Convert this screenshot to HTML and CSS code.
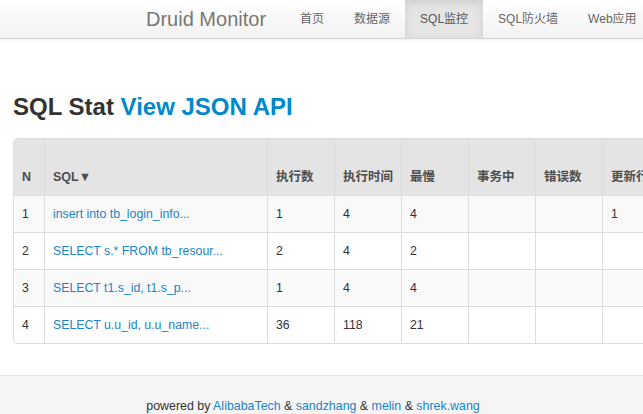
FILE: index.html
```html
<!DOCTYPE html>
<html lang="zh-CN">
<head>
    <meta charset="UTF-8">
    <meta name="viewport" content="width=device-width, initial-scale=1.0">
    <title>Druid Stat Index</title>
    <link rel="stylesheet" href="styles.css">
</head>
<body>
    <div class="navbar">
        <div class="navbar-inner">
            <a class="brand" href="#">Druid Monitor</a>
            <ul class="nav">
                <li><a href="#">首页</a></li>
                <li><a href="#">数据源</a></li>
                <li class="active"><a href="#">SQL监控</a></li>
                <li><a href="#">SQL防火墙</a></li>
                <li><a href="#">Web应用</a></li>
            </ul>
        </div>
    </div>

    <div class="container">
        <h2>SQL Stat <a href="#">View JSON API</a></h2>
        <div class="table-wrap">
            <table class="table">
                <colgroup>
                    <col class="c-n">
                    <col class="c-sql">
                    <col class="c-num">
                    <col class="c-num">
                    <col class="c-num">
                    <col class="c-num">
                    <col class="c-num">
                    <col class="c-num">
                </colgroup>
                <thead>
                    <tr>
                        <th>N</th>
                        <th>SQL▼</th>
                        <th>执行数</th>
                        <th>执行时间</th>
                        <th>最慢</th>
                        <th>事务中</th>
                        <th>错误数</th>
                        <th>更新行数</th>
                    </tr>
                </thead>
                <tbody>
                    <tr>
                        <td>1</td>
                        <td><a href="#">insert into tb_login_info...</a></td>
                        <td>1</td>
                        <td>4</td>
                        <td>4</td>
                        <td></td>
                        <td></td>
                        <td>1</td>
                    </tr>
                    <tr>
                        <td>2</td>
                        <td><a href="#">SELECT s.* FROM tb_resour...</a></td>
                        <td>2</td>
                        <td>4</td>
                        <td>2</td>
                        <td></td>
                        <td></td>
                        <td></td>
                    </tr>
                    <tr>
                        <td>3</td>
                        <td><a href="#">SELECT t1.s_id, t1.s_p...</a></td>
                        <td>1</td>
                        <td>4</td>
                        <td>4</td>
                        <td></td>
                        <td></td>
                        <td></td>
                    </tr>
                    <tr>
                        <td>4</td>
                        <td><a href="#">SELECT u.u_id, u.u_name...</a></td>
                        <td>36</td>
                        <td>118</td>
                        <td>21</td>
                        <td></td>
                        <td></td>
                        <td></td>
                    </tr>
                </tbody>
            </table>
        </div>
    </div>

    <div class="footer">
        <p>powered by <a href="#">AlibabaTech</a> &amp; <a href="#">sandzhang</a> &amp; <a href="#">melin</a> &amp; <a href="#">shrek.wang</a></p>
    </div>
</body>
</html>
```

FILE: styles.css
```css
* {
    margin: 0;
    padding: 0;
    box-sizing: border-box;
}

body {
    font-family: "Liberation Sans", Arial, "Noto Sans CJK SC", sans-serif;
    font-size: 12.3px;
    line-height: 20px;
    color: #333;
    background-color: #fff;
    overflow: hidden;
}

a {
    color: #1a84cc;
    text-decoration: none;
}

.navbar {
    height: 39px;
    background: linear-gradient(to bottom, #ffffff, #f2f2f2);
    border-bottom: 1px solid #d4d4d4;
    box-shadow: 0 1px 4px rgba(0, 0, 0, 0.065);
}

.navbar-inner {
    display: flex;
    padding-left: 146px;
    white-space: nowrap;
    overflow: hidden;
}

.brand {
    font-size: 20px;
    line-height: 38px;
    color: #777;
    margin-right: 19px;
}

.nav {
    display: flex;
    list-style: none;
}

.nav a {
    display: block;
    padding: 0 15px;
    line-height: 38px;
    font-size: 12px;
    color: #666;
}

.nav .active a {
    background-color: #e5e5e5;
    color: #555;
    box-shadow: inset 0 3px 8px rgba(0, 0, 0, 0.1);
}

.container {
    padding: 48px 0 31px 13px;
}

h2 {
    font-size: 24px;
    line-height: 40px;
    font-weight: bold;
    color: #333;
    margin-bottom: 11px;
}

h2 a {
    color: #0088cc;
}

.table-wrap {
    overflow: hidden;
}

.table {
    table-layout: fixed;
    width: 657px;
    border-collapse: separate;
    border-spacing: 0;
    border: 1px solid #ddd;
    border-radius: 4px;
}

.c-n {
    width: 30px;
}

.c-sql {
    width: 223px;
}

.c-num {
    width: 67px;
}

.table th,
.table td {
    padding: 8px;
    line-height: 20px;
    text-align: left;
    border-left: 1px solid #ddd;
    white-space: nowrap;
    overflow: hidden;
}

.table th:first-child,
.table td:first-child {
    border-left: none;
}

.table td {
    border-top: 1px solid #ddd;
}

.table th {
    height: 56px;
    vertical-align: bottom;
    font-size: 12.5px;
    font-weight: bold;
    color: #4d4d4d;
    background-color: #e4e4e4;
}

.table tbody tr:nth-child(odd) td {
    background-color: #f9f9f9;
}

.table thead th:first-child {
    border-top-left-radius: 4px;
}

.table tbody tr:last-child td:first-child {
    border-bottom-left-radius: 4px;
}

.footer {
    background-color: #f5f5f5;
    border-top: 1px solid #e5e5e5;
    padding: 20px 17px 40px 0;
    text-align: center;
    font-size: 12.4px;
}
```
